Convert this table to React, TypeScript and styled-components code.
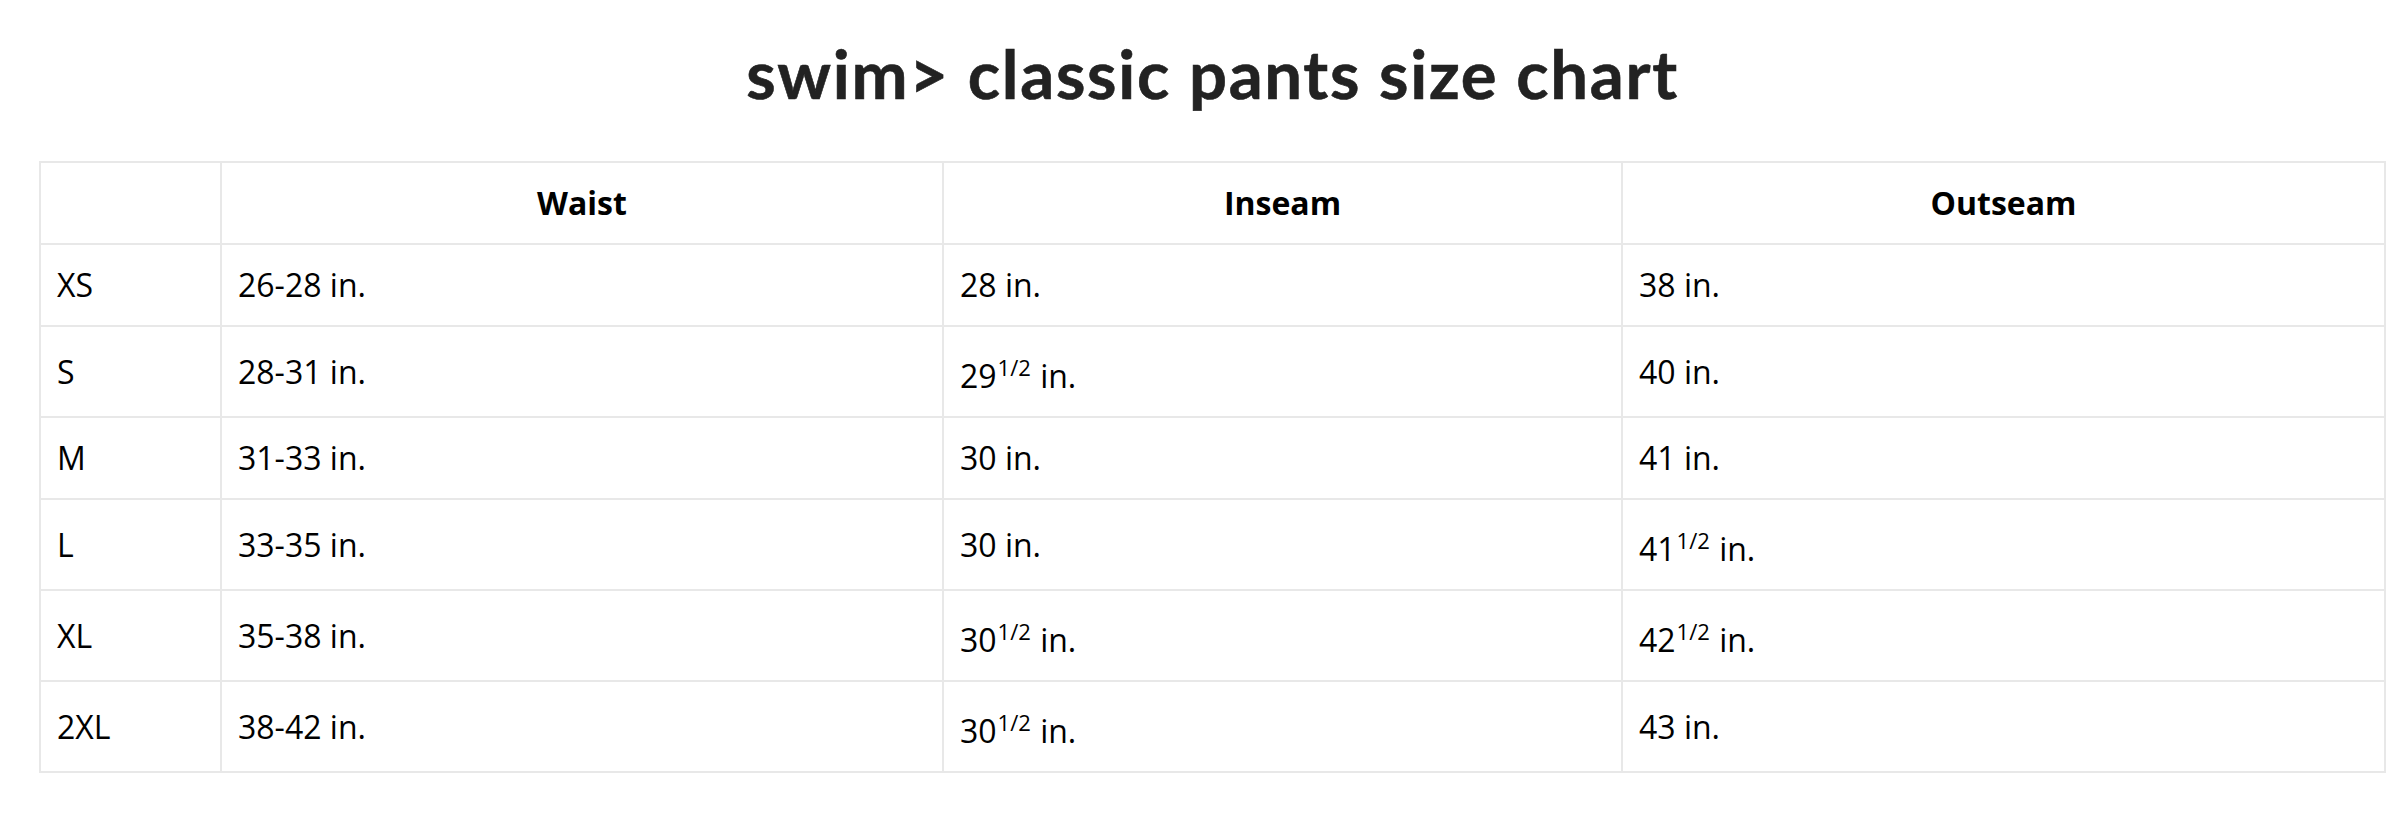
import React from "react";
import styled, {createGlobalStyle} from "styled-components";

const GlobalStyle = createGlobalStyle`
    html, body {
        margin: 0;
        padding: 0;
        background: #ffffff;
    }
`;

const Page = styled.div`
    padding: 0 14px 40px 39px;
    font-family: "Open Sans", "Noto Sans", sans-serif;
    color: #000;
`;

const Title = styled.h1`
    margin: 0;
    padding-top: 33px;
    height: 161px;
    box-sizing: border-box;
    text-align: center;
    font-family: Lato, "Liberation Sans", sans-serif;
    font-weight: 700;
    font-size: 67px;
    letter-spacing: 1.7px;
    line-height: 80px;
    color: #222;
    -webkit-text-stroke: 0.6px #222;
`;

const Table = styled.table`
    width: 100%;
    border-collapse: collapse;
    table-layout: fixed;
    font-size: 32px;
`;

const HeadCell = styled.th`
    border: 2px solid #e8e8e8;
    padding: 18px 16px;
    font-weight: 700;
    text-align: center;
    line-height: 44px;
`;

const Cell = styled.td`
    border: 2px solid #e8e8e8;
    padding: 18px 16px;
    text-align: left;
    line-height: 44px;
    vertical-align: middle;
`;

const Frac = styled.sup`
    font-size: 22px;
    line-height: 45px;
    vertical-align: 12px;
    margin-left: 1px;
    margin-right: 1px;
`;

type Measure = { whole: string; half?: boolean };

interface Row {
    size: string;
    waist: Measure;
    inseam: Measure;
    outseam: Measure;
}

const rows: Row[] = [
    {size: "XS", waist: {whole: "26-28"}, inseam: {whole: "28"}, outseam: {whole: "38"}},
    {size: "S", waist: {whole: "28-31"}, inseam: {whole: "29", half: true}, outseam: {whole: "40"}},
    {size: "M", waist: {whole: "31-33"}, inseam: {whole: "30"}, outseam: {whole: "41"}},
    {size: "L", waist: {whole: "33-35"}, inseam: {whole: "30"}, outseam: {whole: "41", half: true}},
    {size: "XL", waist: {whole: "35-38"}, inseam: {whole: "30", half: true}, outseam: {whole: "42", half: true}},
    {size: "2XL", waist: {whole: "38-42"}, inseam: {whole: "30", half: true}, outseam: {whole: "43"}},
];

const Value = ({m}: { m: Measure }) => (
    <>
        {m.whole}
        {m.half && <Frac>1/2</Frac>} in.
    </>
);

export default function App() {
    return (
        <Page>
            <GlobalStyle/>
            <Title>swim&gt; classic pants size chart</Title>
            <Table>
                <colgroup>
                    <col style={{width: 181}}/>
                    <col style={{width: 722}}/>
                    <col style={{width: 679}}/>
                    <col/>
                </colgroup>
                <thead>
                <tr>
                    <HeadCell/>
                    <HeadCell>Waist</HeadCell>
                    <HeadCell>Inseam</HeadCell>
                    <HeadCell>Outseam</HeadCell>
                </tr>
                </thead>
                <tbody>
                {rows.map((row) => (
                    <tr key={row.size}>
                        <Cell>{row.size}</Cell>
                        <Cell><Value m={row.waist}/></Cell>
                        <Cell><Value m={row.inseam}/></Cell>
                        <Cell><Value m={row.outseam}/></Cell>
                    </tr>
                ))}
                </tbody>
            </Table>
        </Page>
    );
}
